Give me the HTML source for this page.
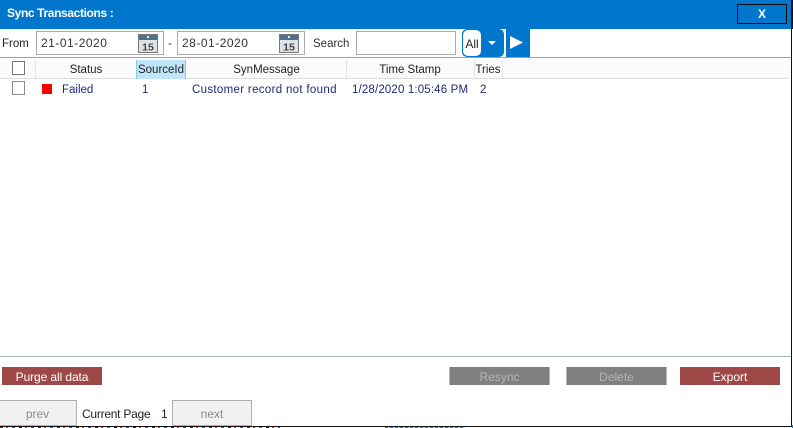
<!DOCTYPE html>
<html>
<head>
<meta charset="utf-8">
<style>
html,body{margin:0;padding:0;background:#fff;}
#p{position:relative;width:793px;height:428px;overflow:hidden;background:#fff;font-family:"Liberation Sans",sans-serif;font-size:11.5px;color:#111;}
#p div{position:absolute;box-sizing:border-box;white-space:nowrap;}
.box{background:#fff;border:1px solid #aaa;}
.d{font-size:12px;color:#333;line-height:22px;padding-left:4px;letter-spacing:.5px;}
.h{top:60px;height:19px;line-height:20px;text-align:center;color:#222;font-size:11.5px;}
.sep{top:60px;width:1px;height:18px;background:#e2e5e8;}
.c{top:81px;height:18px;line-height:18px;color:#1b2a78;font-size:11.5px;}
.b{top:367px;height:18px;line-height:20px;text-align:center;font-size:12px;}
.red{background:#9f4848;color:#fff;}
.gr{background:#808080;color:#b4b4b4;border-left:1px solid #b5b5b5;border-right:1px solid #b5b5b5;}
.pg{top:400px;height:26px;background:#f1f1f1;border:1px solid #b0b0b0;color:#8a8a8a;text-align:center;line-height:26px;font-size:12px;}
</style>
</head>
<body>
<div id="p">
  <div style="left:0;top:0;width:791px;height:29px;background:#0077cc;"></div>
  <div style="left:7px;top:6px;color:#fff;font-weight:bold;font-size:12px;line-height:15px;letter-spacing:-.37px;">Sync Transactions :</div>
  <div style="left:737px;top:4px;width:50px;height:20px;border:1px solid #0a0a0a;color:#fff;font-weight:bold;text-align:center;line-height:19px;font-size:12px;">X</div>

  <div style="left:2px;top:34px;line-height:21px;color:#222;">From</div>
  <div class="box d" style="left:36px;top:31px;width:128px;height:24px;">21-01-2020</div>
  <svg style="position:absolute;left:138px;top:34px" width="20" height="19" viewBox="0 0 20 19">
    <rect x="0.500" y="0.500" width="19" height="18" fill="#dfe3e6" stroke="#777"/>
    <rect x="1" y="1" width="18" height="5" fill="#4d6f92"/>
    <rect x="9" y="2" width="2" height="2" fill="#e8f0f8"/>
    <text x="10" y="16.500" font-family="Liberation Sans" font-size="10.500" font-weight="bold" fill="#444" text-anchor="middle">15</text>
  </svg>
  <div style="left:168px;top:34px;line-height:21px;color:#333;">-</div>
  <div class="box d" style="left:177px;top:31px;width:128px;height:24px;">28-01-2020</div>
  <svg style="position:absolute;left:279px;top:34px" width="20" height="19" viewBox="0 0 20 19">
    <rect x="0.500" y="0.500" width="19" height="18" fill="#dfe3e6" stroke="#777"/>
    <rect x="1" y="1" width="18" height="5" fill="#4d6f92"/>
    <rect x="9" y="2" width="2" height="2" fill="#e8f0f8"/>
    <text x="10" y="16.500" font-family="Liberation Sans" font-size="10.500" font-weight="bold" fill="#444" text-anchor="middle">15</text>
  </svg>
  <div style="left:313px;top:34px;line-height:21px;color:#333;">Search</div>
  <div class="box" style="left:356px;top:31px;width:100px;height:24px;"></div>

  <div style="left:462px;top:29px;width:42px;height:28px;background:#0077cc;border-radius:5px;"></div>
  <div style="left:463px;top:30px;width:18px;height:26px;background:#fff;border-radius:5px;line-height:28px;text-align:center;font-size:12px;color:#222;">All</div>
  <svg style="position:absolute;left:487px;top:41px" width="10" height="5"><path d="M1 0H9L5 4Z" fill="#fff"/></svg>
  <div style="left:506px;top:29px;width:24px;height:28px;background:#0077cc;"></div>
  <svg style="position:absolute;left:510px;top:36px" width="14" height="13"><path d="M0 0L13 6.500L0 13Z" fill="#fff"/></svg>

  <div style="left:0;top:57px;width:791px;height:1px;background:#8ea6ba;"></div>
  <div style="left:0;top:58px;width:791px;height:21px;background:#fbfbfc;"></div>
  <div style="left:0;top:78px;width:789px;height:1px;background:#dcdcdc;"></div>
  <div style="left:12px;top:61px;width:13px;height:14px;background:#fff;border:1px solid #777;"></div>
  <div class="sep" style="left:35px;"></div>
  <div class="h" style="left:36px;width:100px;">Status</div>
  <div style="left:136px;top:60px;width:50px;height:19px;background:#bfe6f8;border-left:1px solid #8fc8e2;border-right:1px solid #8fc8e2;"></div>
  <div class="h" style="left:136px;width:50px;">SourceId</div>
  <div class="h" style="left:187px;width:159px;">SynMessage</div>
  <div class="sep" style="left:346px;"></div>
  <div class="h" style="left:347px;width:126px;">Time Stamp</div>
  <div class="sep" style="left:474px;"></div>
  <div class="h" style="left:475px;width:26px;">Tries</div>
  <div class="sep" style="left:502px;"></div>

  <div style="left:12px;top:81px;width:13px;height:14px;background:#fff;border:1px solid #888;"></div>
  <div style="left:42px;top:84px;width:10px;height:10px;background:#ff0000;"></div>
  <div class="c" style="left:62px;">Failed</div>
  <div class="c" style="left:142px;">1</div>
  <div class="c" style="left:192px;letter-spacing:.32px;">Customer record not found</div>
  <div class="c" style="left:352px;letter-spacing:.15px;">1/28/2020 1:05:46 PM</div>
  <div class="c" style="left:480px;">2</div>

  <div style="left:0;top:356px;width:791px;height:1px;background:#a3b6c4;"></div>
  <div class="b red" style="left:2px;width:100px;letter-spacing:-.1px;">Purge all data</div>
  <div class="b gr" style="left:449px;width:101px;">Resync</div>
  <div class="b gr" style="left:566px;width:101px;">Delete</div>
  <div class="b red" style="left:680px;width:100px;">Export</div>

  <div class="pg" style="left:-2px;width:79px;">prev</div>
  <div style="left:82px;top:406px;line-height:16px;font-size:12px;color:#222;letter-spacing:-.25px;">Current Page</div>
  <div style="left:161px;top:406px;line-height:16px;font-size:12px;color:#222;">1</div>
  <div class="pg" style="left:172px;width:80px;">next</div>

  <div style="left:0;top:426px;width:792px;height:1px;background:#111;"></div>
  <div style="left:791px;top:0;width:2px;height:29px;background:#111;"></div>
  <div style="left:791px;top:29px;width:1px;height:398px;background:#111;"></div>
  <div style="left:0;top:427px;width:280px;height:1px;background:repeating-linear-gradient(90deg,#222 0 3px,#fff 3px 6px,#c33 6px 8px,#fff 8px 12px,#357 12px 15px,#fff 15px 19px);"></div>
  <div style="left:385px;top:427px;width:80px;height:1px;background:repeating-linear-gradient(90deg,#2a7fc0 0 3px,#cfe3f2 3px 5px);"></div>
  <div style="left:792px;top:425px;width:1px;height:3px;background:#1a7fc4;"></div>
</div>
</body>
</html>
